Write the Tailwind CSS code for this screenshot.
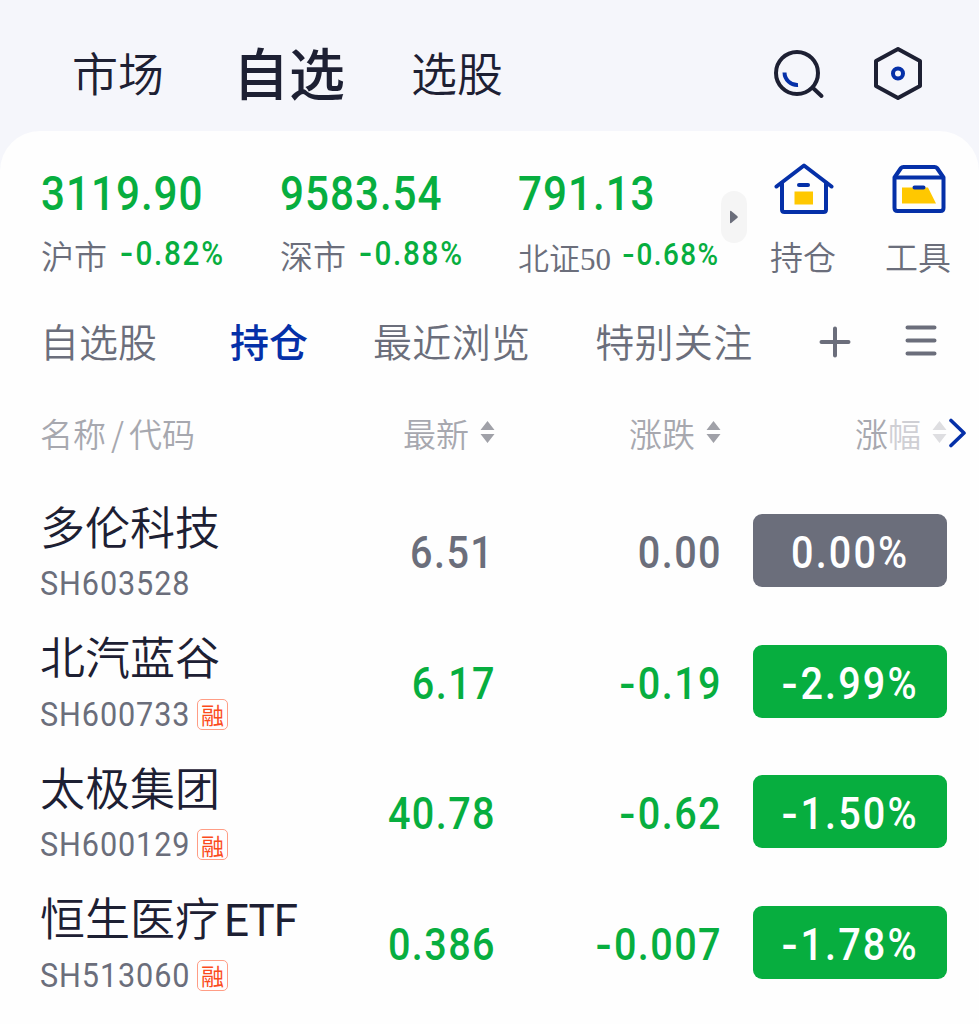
<!DOCTYPE html>
<html lang="zh-CN">

<head>
    <meta charset="UTF-8">
    <meta name="viewport" content="width=device-width, initial-scale=1.0">
    <title>自选</title>
    <script src="https://cdn.jsdelivr.net/npm/@tailwindcss/browser@4"></script>
</head>

<body class="h-screen overflow-hidden bg-[#f5f6fb] font-['Noto_Sans_CJK_SC',sans-serif] font-[350] text-[#1d2033]">
    <!-- Top navigation -->
    <header class="flex h-[131px] items-center pt-[11px] pl-[72px] pr-[56px] whitespace-nowrap">
        <a class="text-[46px]">市场</a>
        <a class="ml-[69px] text-[56px] font-medium">自选</a>
        <a class="ml-[66px] text-[46px]">选股</a>
        <div class="ml-auto flex items-center gap-[48px] pt-[5px]">
            <svg class="h-[54px] w-[54px]" viewBox="0 0 54 54" fill="none" stroke-linecap="round">
                <circle cx="26" cy="26" r="21" stroke="#1d2033" stroke-width="4" />
                <path d="M42 41l8.500 8" stroke="#1d2033" stroke-width="4" />
                <path d="M13.500 25.500A12.8 12.8 0 0 0 27 38" stroke="#0530a8" stroke-width="4" stroke-linecap="butt" />
            </svg>
            <svg class="h-[54px] w-[50px]" viewBox="0 0 50 54" fill="none" stroke-linejoin="round">
                <path d="M25 2L47 14V39L25 51L3 39V14Z" stroke="#1d2033" stroke-width="4" />
                <circle cx="25" cy="26.500" r="5" stroke="#0530a8" stroke-width="4" />
            </svg>
        </div>
    </header>

    <main class="h-[893px] rounded-t-[40px] bg-[#fefefe]">
        <!-- Market indexes -->
        <section class="flex h-[179px] pt-[38px] pl-[41px] whitespace-nowrap">
            <div class="w-[239px]">
                <p class="origin-left scale-x-[0.88] font-[Roboto] text-[48px] leading-[50px] font-medium tracking-[1.1px] text-[#07ae3f]">3119.90</p>
                <p class="mt-[15px] flex h-[40px] items-center">
                    <span class="pt-[3px] text-[33px] text-[#6b6e7b]">沪市</span>
                    <span class="ml-[13px] origin-left scale-x-[0.9] font-[Roboto] text-[33px] font-medium tracking-[1.9px] text-[#07ae3f]"><span class="mx-[2px] inline-block scale-x-[1.3]">-</span>0.82%</span>
                </p>
            </div>
            <div class="w-[238px]">
                <p class="origin-left scale-x-[0.88] font-[Roboto] text-[48px] leading-[50px] font-medium tracking-[1.1px] text-[#07ae3f]">9583.54</p>
                <p class="mt-[15px] flex h-[40px] items-center">
                    <span class="pt-[3px] text-[33px] text-[#6b6e7b]">深市</span>
                    <span class="ml-[13px] origin-left scale-x-[0.9] font-[Roboto] text-[33px] font-medium tracking-[1.9px] text-[#07ae3f]"><span class="mx-[2px] inline-block scale-x-[1.3]">-</span>0.88%</span>
                </p>
            </div>
            <div class="w-[203px]">
                <p class="origin-left scale-x-[0.88] font-[Roboto] text-[48px] leading-[50px] font-medium tracking-[1.1px] text-[#07ae3f]">791.13</p>
                <p class="mt-[15px] flex h-[40px] items-center">
                    <span class="pt-[12px] font-['Liberation_Serif','Noto_Sans_CJK_SC',serif] text-[31px] text-[#6b6e7b]">北证50</span>
                    <span class="ml-[11px] origin-left scale-x-[0.9] pt-[3px] font-[Roboto] text-[31px] font-medium tracking-[1.6px] text-[#07ae3f]"><span class="mx-[2px] inline-block scale-x-[1.3]">-</span>0.68%</span>
                </p>
            </div>
            <button class="mt-[22px] flex h-[52px] w-[26px] shrink-0 items-center justify-center rounded-full bg-[#f5f5f5]">
                <svg class="h-[14px] w-[8px]" viewBox="0 0 8 14" fill="#6b6e7b">
                    <path d="M0 1.500Q0 .3 1.200 1L7.500 6.300Q8 7 7.500 7.700L1.200 13Q0 13.700 0 12.500Z" />
                </svg>
            </button>
            <a class="ml-[23px] flex w-[66px] shrink-0 flex-col items-center">
                <svg class="-mt-[7px] ml-[2px] h-[54px] w-[60px]" viewBox="0 0 60 54" fill="none" stroke="#0530a8" stroke-width="4" stroke-linecap="round" stroke-linejoin="round">
                    <path d="M20.500 29.500h18.500v13h-18.500z" fill="#ffc800" stroke="none" />
                    <path d="M2.500 24.500L30 3.500L57.500 24.500" />
                    <path d="M8 21V47.500Q8 50 10.500 50H49.500Q52 50 52 47.500V21" />
                    <path d="M25 23h9" />
                </svg>
                <span class="mt-[20px] text-[33px] leading-[40px] text-[#6b6e7b]">持仓</span>
            </a>
            <a class="ml-[49px] flex w-[66px] shrink-0 flex-col items-center">
                <svg class="-mt-[7px] ml-[1px] h-[54px] w-[54px]" viewBox="0 0 54 54" fill="none" stroke="#0530a8" stroke-width="4" stroke-linecap="round" stroke-linejoin="round">
                    <path d="M10 25.500h26L44 41.500H10z" fill="#ffc800" stroke="none" />
                    <path d="M2.500 15.500L9 6Q9.800 5 11.500 5H42.500Q44.200 5 45 6L51.500 15.500V46Q51.500 49 48.500 49H5.500Q2.500 49 2.500 46Z" />
                    <path d="M4 15.500H50M22.500 25.500h9" />
                </svg>
                <span class="mt-[20px] text-[33px] leading-[40px] text-[#6b6e7b]">工具</span>
            </a>
        </section>

        <!-- Group tabs -->
        <nav class="flex h-[60px] items-center pl-[40px] text-[39px] leading-[60px] whitespace-nowrap text-[#6b6e7b]">
            <a>自选股</a>
            <a class="ml-[73px] font-medium text-[#0530a8]">持仓</a>
            <a class="ml-[65px] tracking-[0.3px]">最近浏览</a>
            <a class="ml-[65px] tracking-[0.3px]">特别关注</a>
            <svg class="mt-[3px] ml-[67px] h-[32px] w-[32px]" viewBox="0 0 32 32" stroke="#6b6e7b" stroke-width="4" stroke-linecap="round">
                <path d="M2.500 16h27M16 2.500v27" />
            </svg>
            <svg class="mt-[1px] ml-[54px] h-[32px] w-[32px]" viewBox="0 0 32 32" stroke="#6b6e7b" stroke-width="4" stroke-linecap="round">
                <path d="M2.500 2.500h27M2.500 15.500h27M2.500 28.500h27" />
            </svg>
        </nav>

        <!-- Table header -->
        <div class="mt-[38px] flex h-[50px] items-center pl-[40px] text-[33px] leading-[50px] whitespace-nowrap text-[#a7a8af]">
            <span class="w-[363px]">名称<span class="mx-[5px]">/</span>代码</span>
            <span class="flex w-[226px] items-center gap-[11px]">最新
                <svg class="mb-[2px] h-[24px] w-[15px]" viewBox="0 0 15 24" fill="#a0a1a8"><path d="M7.500 1L14.500 10H.5zM.5 14H14.500L7.500 23z" /></svg>
            </span>
            <span class="flex w-[226px] items-center gap-[11px]">涨跌
                <svg class="mb-[2px] h-[24px] w-[15px]" viewBox="0 0 15 24" fill="#a0a1a8"><path d="M7.500 1L14.500 10H.5zM.5 14H14.500L7.500 23z" /></svg>
            </span>
            <span class="flex items-center"><span>涨</span><span class="text-[#cfcfd4]">幅</span>
                <svg class="mb-[2px] ml-[11px] h-[24px] w-[15px]" viewBox="0 0 15 24" fill="#dedee1"><path d="M7.500 1L14.500 10H.5zM.5 14H14.500L7.500 23z" /></svg>
                <svg class="ml-[2px] h-[30px] w-[18px]" viewBox="0 0 18 30" fill="none" stroke="#0530a8" stroke-width="3.600" stroke-linecap="round" stroke-linejoin="round"><path d="M2 2.500L15 15L2 27.500" /></svg>
            </span>
        </div>

        <!-- Holdings -->
        <ul class="mt-[27.500px] whitespace-nowrap">
            <li class="flex h-[130.500px] items-center pl-[40px]">
                <div class="w-[300px]">
                    <p class="text-[45px] leading-[60px]">多伦科技</p>
                    <p class="mt-[6px] flex h-[44px] items-center font-[Roboto] text-[34px] font-normal text-[#6b6e7b]"><span class="w-[157px] origin-left scale-x-[0.9] tracking-[1px]">SH603528</span></p>
                </div>
                <span class="w-[156px] origin-right scale-x-[0.88] pt-[4px] pr-[2px] text-right font-[Roboto] text-[45px] font-medium tracking-[1.6px] text-[#6b6e7b]">6.51</span>
                <span class="w-[226px] origin-right scale-x-[0.88] pt-[4px] text-right font-[Roboto] text-[45px] font-medium tracking-[1.6px] text-[#6b6e7b]">0.00</span>
                <span class="ml-[31px] flex h-[73px] w-[194px] items-center justify-center rounded-[9px] bg-[#6b6e7b] pt-[4px] font-[Roboto] text-[45px] font-medium text-white"><span class="scale-x-[0.88] tracking-[2.4px]">0.00%</span></span>
            </li>
            <li class="flex h-[130.500px] items-center pl-[40px]">
                <div class="w-[300px]">
                    <p class="text-[45px] leading-[60px]">北汽蓝谷</p>
                    <p class="mt-[6px] flex h-[44px] items-center font-[Roboto] text-[34px] font-normal text-[#6b6e7b]"><span class="w-[157px] origin-left scale-x-[0.9] tracking-[1px]">SH600733</span>
                        <span class="flex h-[31px] w-[31px] items-center justify-center rounded-[5px] border border-[#ff9d85] font-['Noto_Sans_CJK_SC'] text-[23px] text-[#fb4b1c]">融</span>
                    </p>
                </div>
                <span class="w-[156px] origin-right scale-x-[0.88] pt-[4px] text-right font-[Roboto] text-[45px] font-medium tracking-[1.6px] text-[#07ae3f]">6.17</span>
                <span class="w-[226px] origin-right scale-x-[0.88] pt-[4px] text-right font-[Roboto] text-[45px] font-medium tracking-[1.6px] text-[#07ae3f]"><span class="mx-[2px] inline-block scale-x-[1.2]">-</span>0.19</span>
                <span class="ml-[31px] flex h-[73px] w-[194px] items-center justify-center rounded-[9px] bg-[#07ae3f] pt-[4px] font-[Roboto] text-[45px] font-medium text-white"><span class="scale-x-[0.88] tracking-[2.4px]"><span class="mx-[2px] inline-block scale-x-[1.2]">-</span>2.99%</span></span>
            </li>
            <li class="flex h-[130.500px] items-center pl-[40px]">
                <div class="w-[300px]">
                    <p class="text-[45px] leading-[60px]">太极集团</p>
                    <p class="mt-[6px] flex h-[44px] items-center font-[Roboto] text-[34px] font-normal text-[#6b6e7b]"><span class="w-[157px] origin-left scale-x-[0.9] tracking-[1px]">SH600129</span>
                        <span class="flex h-[31px] w-[31px] items-center justify-center rounded-[5px] border border-[#ff9d85] font-['Noto_Sans_CJK_SC'] text-[23px] text-[#fb4b1c]">融</span>
                    </p>
                </div>
                <span class="w-[156px] origin-right scale-x-[0.88] pt-[4px] text-right font-[Roboto] text-[45px] font-medium tracking-[1.6px] text-[#07ae3f]">40.78</span>
                <span class="w-[226px] origin-right scale-x-[0.88] pt-[4px] text-right font-[Roboto] text-[45px] font-medium tracking-[1.6px] text-[#07ae3f]"><span class="mx-[2px] inline-block scale-x-[1.2]">-</span>0.62</span>
                <span class="ml-[31px] flex h-[73px] w-[194px] items-center justify-center rounded-[9px] bg-[#07ae3f] pt-[4px] font-[Roboto] text-[45px] font-medium text-white"><span class="scale-x-[0.88] tracking-[2.4px]"><span class="mx-[2px] inline-block scale-x-[1.2]">-</span>1.50%</span></span>
            </li>
            <li class="flex h-[130.500px] items-center pl-[40px]">
                <div class="w-[300px]">
                    <p class="h-[60px] text-[45px] leading-[60px]">恒生医疗<span class="ml-[4px] font-[Roboto] text-[44px] leading-[40px] font-normal tracking-[-1px]">ETF</span></p>
                    <p class="mt-[6px] flex h-[44px] items-center font-[Roboto] text-[34px] font-normal text-[#6b6e7b]"><span class="w-[157px] origin-left scale-x-[0.9] tracking-[1px]">SH513060</span>
                        <span class="flex h-[31px] w-[31px] items-center justify-center rounded-[5px] border border-[#ff9d85] font-['Noto_Sans_CJK_SC'] text-[23px] text-[#fb4b1c]">融</span>
                    </p>
                </div>
                <span class="w-[156px] origin-right scale-x-[0.88] pt-[4px] text-right font-[Roboto] text-[45px] font-medium tracking-[1.6px] text-[#07ae3f]">0.386</span>
                <span class="w-[226px] origin-right scale-x-[0.88] pt-[4px] text-right font-[Roboto] text-[45px] font-medium tracking-[1.6px] text-[#07ae3f]"><span class="mx-[2px] inline-block scale-x-[1.2]">-</span>0.007</span>
                <span class="ml-[31px] flex h-[73px] w-[194px] items-center justify-center rounded-[9px] bg-[#07ae3f] pt-[4px] font-[Roboto] text-[45px] font-medium text-white"><span class="scale-x-[0.88] tracking-[2.4px]"><span class="mx-[2px] inline-block scale-x-[1.2]">-</span>1.78%</span></span>
            </li>
        </ul>
    </main>
</body>

</html>
